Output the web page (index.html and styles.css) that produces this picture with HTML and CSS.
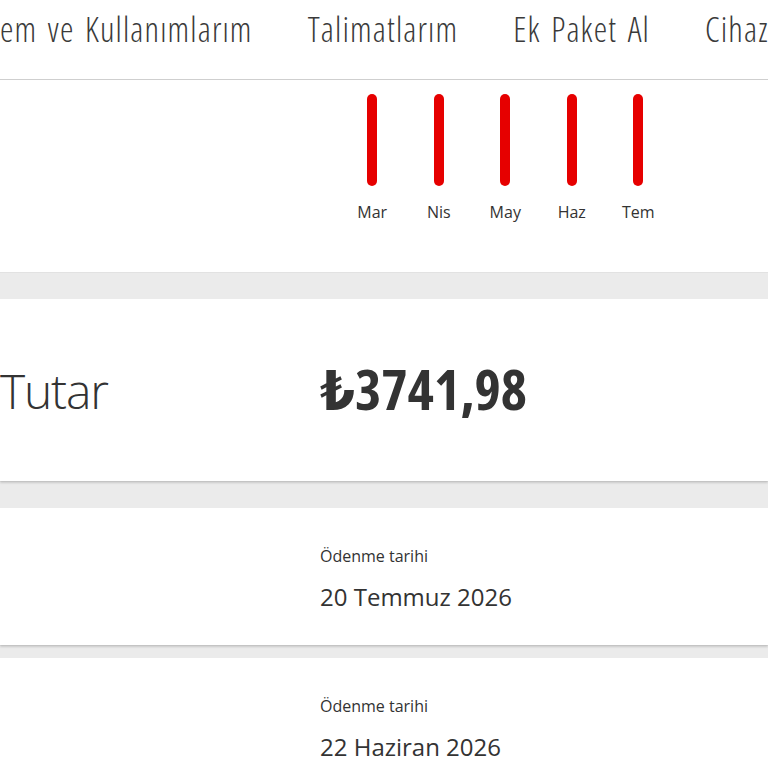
FILE: index.html
```html
<!DOCTYPE html>
<html lang="tr">
<head>
<meta charset="utf-8">
<link rel="stylesheet" href="styles.css">
</head>
<body>
<div class="page">
  <nav class="nav">
    <span class="nav-item">em ve Kullanımlarım</span>
    <span class="nav-item">Talimatlarım</span>
    <span class="nav-item">Ek Paket Al</span>
    <span class="nav-item">Cihaz</span>
  </nav>
  <section class="chart">
    <div class="col"><div class="bar"></div><div class="month">Mar</div></div>
    <div class="col"><div class="bar"></div><div class="month">Nis</div></div>
    <div class="col"><div class="bar"></div><div class="month">May</div></div>
    <div class="col"><div class="bar"></div><div class="month">Haz</div></div>
    <div class="col"><div class="bar"></div><div class="month">Tem</div></div>
  </section>
  <div class="band band-1"></div>
  <section class="card card-total">
    <div class="total-label">Tutar</div>
    <div class="total-value">₺3741,98</div>
  </section>
  <div class="band band-2"></div>
  <section class="card card-bill">
    <div class="spacer"></div>
    <div class="bill">
      <div class="bill-label">Ödenme tarihi</div>
      <div class="bill-date">20 Temmuz 2026</div>
    </div>
  </section>
  <div class="band band-3"></div>
  <section class="card card-bill">
    <div class="spacer"></div>
    <div class="bill">
      <div class="bill-label">Ödenme tarihi</div>
      <div class="bill-date">22 Haziran 2026</div>
    </div>
  </section>
</div>
</body>
</html>
```
FILE: styles.css
```css
html, body {
  margin: 0;
  padding: 0;
  background: #fff;
}
body {
  width: 768px;
  height: 768px;
  overflow: hidden;
  font-family: "Open Sans", "DejaVu Sans", sans-serif;
  color: #333;
}
.page {
  width: 768px;
}
.nav {
  display: flex;
  gap: 55px;
  height: 80px;
  border-bottom: 1px solid #cfcfcf;
  white-space: nowrap;
  overflow: hidden;
  box-sizing: border-box;
}
.nav-item {
  font-size: 34px;
  font-weight: 300;
  font-stretch: condensed;
  letter-spacing: 1.15px;
  word-spacing: 3px;
  line-height: 58px;
  color: #3a3a3a;
  flex: none;
}
.chart {
  display: flex;
  height: 192px;
  padding-left: 339px;
  box-sizing: border-box;
}
.col {
  width: 66.5px;
  display: flex;
  flex-direction: column;
  align-items: center;
}
.bar {
  width: 10px;
  height: 92px;
  margin-top: 14px;
  background: #e60000;
  border-radius: 5px;
}
.month {
  margin-top: 15px;
  font-size: 16px;
  color: #333;
}
.band {
  background: #ebebeb;
  border-top: 1px solid #e2e2e2;
  box-sizing: border-box;
}
.band-1 { height: 27px; }
.band-2 { height: 27px; }
.band-3 { height: 13px; }
.card {
  background: #fff;
  box-shadow: 0 2px 2px rgba(0, 0, 0, 0.14);
  position: relative;
  display: grid;
  grid-template-columns: 320px 1fr;
}
.card-total {
  height: 182px;
  align-items: center;
}
.total-label {
  font-size: 48px;
  font-weight: 300;
  letter-spacing: -1.2px;
  color: #333;
  padding-bottom: 0;
}
.total-value {
  font-size: 56px;
  font-weight: 700;
  font-stretch: condensed;
  color: #333;
  padding-bottom: 4px;
}
.card-bill {
  height: 137px;
}
.bill {
  padding-top: 37px;
}
.bill-label {
  font-size: 16px;
  font-weight: 400;
  color: #333;
}
.bill-date {
  margin-top: 13px;
  font-size: 24px;
  color: #333;
}
```
